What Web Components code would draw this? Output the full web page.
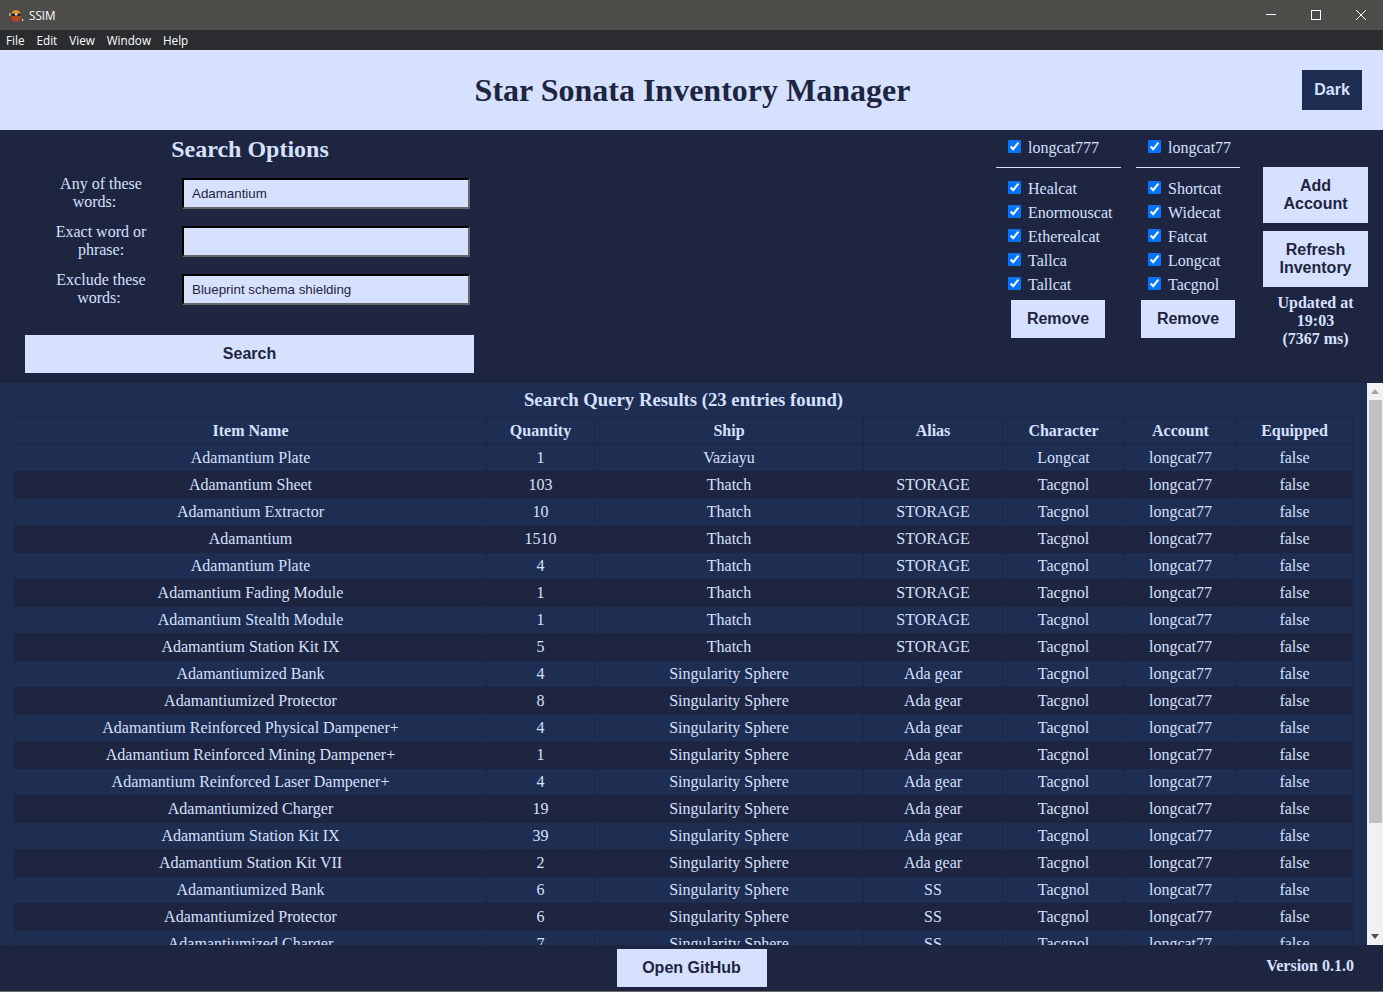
<!DOCTYPE html>
<html>
<head>
<meta charset="utf-8">
<title>SSIM</title>
<style>
  html, body { margin: 0; padding: 0; height: 100%; overflow: hidden; background: #1e2540; }
  body { font-family: "Liberation Serif", serif; font-size: 16px; color: #d6e0ff; }
  ssim-app { height: 992px; }
</style>
</head>
<body>
<ssim-app></ssim-app>
<script>
// small button used all over the page
class SsimButton extends HTMLElement {
  constructor () {
    super()
    this.attachShadow({ mode: 'open' }).innerHTML = `
      <style>
        :host {
          display: flex;
          align-items: center;
          justify-content: center;
          box-sizing: border-box;
          text-align: center;
          font: bold 16px/18px "Liberation Sans", Arial, sans-serif;
          background: #d6e0ff;
          color: #1e2540;
          cursor: pointer;
        }
        :host([dark]) { background: #1e2d52; color: #d6e0ff; }
      </style>
      <slot></slot>`
  }
}
customElements.define('ssim-button', SsimButton)

class SsimTitlebar extends HTMLElement {
  constructor () {
    super()
    this.attachShadow({ mode: 'open' }).innerHTML = `
      <style>
        :host {
          display: flex;
          align-items: center;
          height: 30px;
          background: #4d4c49;
          color: #fff;
          font: 11.7px "Open Sans", "Noto Sans", sans-serif;
        }
        .icon { margin: 0 5px 0 8px; }
        .title { flex: 1; padding-bottom: 1px; }
        .ctl { width: 45px; height: 30px; display: flex; align-items: center; justify-content: center; }
      </style>
      <svg class="icon" width="16" height="16" viewBox="0 0 16 16">
        <path d="M1 7.5h3" stroke="#9a9a98" stroke-width="3" fill="none"/>
        <circle cx="8" cy="8" r="5" fill="#c9702a"/>
        <path d="M3.5 6a5 5 0 0 1 9 0Z" fill="#e09a3c"/>
        <path d="M3 9.6a5 5 0 0 0 10 0Z" fill="#b8431c"/>
        <rect x="3.2" y="6.6" width="9.6" height="2.6" fill="#2c2422"/>
        <rect x="7" y="6.4" width="2.4" height="2" fill="#f4efe8"/>
        <rect x="14" y="12" width="1.2" height="2" fill="#d8d8d6"/>
      </svg>
      <span class="title">SSIM</span>
      <span class="ctl"><svg width="10" height="10" viewBox="0 0 10 10"><path d="M0 4.5H10" stroke="#fff" fill="none"/></svg></span>
      <span class="ctl"><svg width="10" height="10" viewBox="0 0 10 10"><rect x=".5" y=".5" width="9" height="9" stroke="#fff" fill="none"/></svg></span>
      <span class="ctl"><svg width="10" height="10" viewBox="0 0 10 10"><path d="M0 0L10 10M10 0L0 10" stroke="#fff" fill="none"/></svg></span>`
  }
}
customElements.define('ssim-titlebar', SsimTitlebar)

class SsimMenu extends HTMLElement {
  constructor () {
    super()
    var items = ['File', 'Edit', 'View', 'Window', 'Help']
    this.attachShadow({ mode: 'open' }).innerHTML = `
      <style>
        :host {
          display: flex;
          align-items: center;
          gap: 12px;
          box-sizing: border-box;
          height: 20px;
          padding: 0 0 1px 6px;
          background: #2b2c30;
          color: #fff;
          font: 11.7px "Open Sans", "Noto Sans", sans-serif;
        }
      </style>
      ${items.map(i => `<span>${i}</span>`).join('')}`
  }
}
customElements.define('ssim-menu', SsimMenu)

class SsimHeader extends HTMLElement {
  constructor () {
    super()
    this.attachShadow({ mode: 'open' }).innerHTML = `
      <style>
        :host {
          display: grid;
          grid-template-columns: 1fr auto 1fr;
          align-items: center;
          height: 80px;
          background: #d6e0ff;
          color: #1e2540;
        }
        h1 { grid-column: 2; margin: 0 0 0 2px; font: bold 32px "Liberation Serif", serif; }
        ssim-button { grid-column: 3; justify-self: end; width: 60px; height: 40px; margin-right: 21px; }
      </style>
      <h1>Star Sonata Inventory Manager</h1>
      <ssim-button dark>Dark</ssim-button>`
  }
}
customElements.define('ssim-header', SsimHeader)

class SsimField extends HTMLElement {
  constructor () {
    super()
    this.attachShadow({ mode: 'open' }).innerHTML = `
      <style>
        :host { display: flex; align-items: center; height: 36px; }
        label { width: 100px; margin-left: 51px; margin-right: 31px; text-align: center; line-height: 18px; }
        input {
          box-sizing: border-box;
          width: 288px;
          height: 31px;
          padding: 0 8px;
          border: 2px inset #767676;
          border-color: #222 #666 #666 #222;
          background: #d6e0ff;
          color: #1e2540;
          font: 13.33px "Liberation Sans", Arial, sans-serif;
          outline: none;
        }
      </style>
      <label><slot></slot></label>
      <input type="text">`
    this.shadowRoot.querySelector('input').value = this.getAttribute('value') || ''
  }
}
customElements.define('ssim-field', SsimField)

class SsimSearch extends HTMLElement {
  constructor () {
    super()
    this.attachShadow({ mode: 'open' }).innerHTML = `
      <style>
        :host { display: block; width: 500px; box-sizing: border-box; }
        h2 { margin: 5px 0 12px; text-align: center; font: bold 24px/28px "Liberation Serif", serif; }
        .fields { display: flex; flex-direction: column; gap: 12px; }
        ssim-button { width: 449px; height: 38px; margin: 28px 0 0 25px; }
      </style>
      <h2>Search Options</h2>
      <div class="fields">
        <ssim-field value="Adamantium">Any of these <span style="padding-right:13px">words:</span></ssim-field>
        <ssim-field>Exact word or phrase:</ssim-field>
        <ssim-field value="Blueprint schema shielding">Exclude these <span style="padding-right:4px">words:</span></ssim-field>
      </div>
      <ssim-button>Search</ssim-button>`
  }
}
customElements.define('ssim-search', SsimSearch)

class SsimCheck extends HTMLElement {
  constructor () {
    super()
    this.attachShadow({ mode: 'open' }).innerHTML = `
      <style>
        :host { display: flex; align-items: center; height: 24px; white-space: nowrap; }
        input { width: 13px; height: 13px; margin: 0 7px 3px 0; accent-color: #0075ff; }
      </style>
      <input type="checkbox" checked><slot></slot>`
  }
}
customElements.define('ssim-check', SsimCheck)

class SsimAccount extends HTMLElement {
  constructor () {
    super()
    var name = this.getAttribute('name')
    var chars = this.getAttribute('chars').split(',')
    this.attachShadow({ mode: 'open' }).innerHTML = `
      <style>
        :host { display: block; width: var(--col-w); }
        .head { padding: 6px 0 7px var(--col-pad); }
        hr { margin: 0 0 9px; border: 0; height: 1px; background: #d6e0ff; width: var(--rule-w); }
        .chars { padding-left: var(--col-pad); }
        ssim-button { width: 94px; height: 38px; margin: 3px 0 0 var(--btn-x); }
      </style>
      <div class="head"><ssim-check>${name}</ssim-check></div>
      <hr>
      <div class="chars">${chars.map(c => `<ssim-check>${c}</ssim-check>`).join('')}</div>
      <ssim-button>Remove</ssim-button>`
  }
}
customElements.define('ssim-account', SsimAccount)

class SsimActions extends HTMLElement {
  constructor () {
    super()
    this.attachShadow({ mode: 'open' }).innerHTML = `
      <style>
        :host { display: flex; flex-direction: column; width: 105px; padding-top: 37px; }
        ssim-button { height: 56px; margin-bottom: 8px; }
        p { margin: -1px 0 0; text-align: center; font-weight: bold; line-height: 18px; }
      </style>
      <ssim-button>Add<br>Account</ssim-button>
      <ssim-button>Refresh<br>Inventory</ssim-button>
      <p>Updated at<br>19:03<br>(7367 ms)</p>`
  }
}
customElements.define('ssim-actions', SsimActions)

class SsimTop extends HTMLElement {
  constructor () {
    super()
    this.attachShadow({ mode: 'open' }).innerHTML = `
      <style>
        :host { display: flex; height: 253px; background: #1e2540; }
        .gap { flex: 1; }
        .a1 { --col-w: 125px; --col-pad: 12px; --rule-w: 125px; --btn-x: 15px; margin-right: 15px; }
        .a2 { --col-w: 104px; --col-pad: 12px; --rule-w: 104px; --btn-x: 5px; margin-right: 23px; }
        ssim-actions { margin-right: 15px; }
      </style>
      <ssim-search></ssim-search>
      <div class="gap"></div>
      <ssim-account class="a1" name="longcat777" chars="Healcat,Enormouscat,Etherealcat,Tallca,Tallcat"></ssim-account>
      <ssim-account class="a2" name="longcat77" chars="Shortcat,Widecat,Fatcat,Longcat,Tacgnol"></ssim-account>
      <ssim-actions></ssim-actions>`
  }
}
customElements.define('ssim-top', SsimTop)

var COLS = ['Item Name', 'Quantity', 'Ship', 'Alias', 'Character', 'Account', 'Equipped']
var WIDTHS = [472, 108, 269, 139, 122, 112, 116]
var T = 'Thatch', S = 'Singularity Sphere', ST = 'STORAGE', A = 'Ada gear'
var ROWS = [
  ['Adamantium Plate', 1, 'Vaziayu', '', 'Longcat'],
  ['Adamantium Sheet', 103, T, ST],
  ['Adamantium Extractor', 10, T, ST],
  ['Adamantium', 1510, T, ST],
  ['Adamantium Plate', 4, T, ST],
  ['Adamantium Fading Module', 1, T, ST],
  ['Adamantium Stealth Module', 1, T, ST],
  ['Adamantium Station Kit IX', 5, T, ST],
  ['Adamantiumized Bank', 4, S, A],
  ['Adamantiumized Protector', 8, S, A],
  ['Adamantium Reinforced Physical Dampener+', 4, S, A],
  ['Adamantium Reinforced Mining Dampener+', 1, S, A],
  ['Adamantium Reinforced Laser Dampener+', 4, S, A],
  ['Adamantiumized Charger', 19, S, A],
  ['Adamantium Station Kit IX', 39, S, A],
  ['Adamantium Station Kit VII', 2, S, A],
  ['Adamantiumized Bank', 6, S, 'SS'],
  ['Adamantiumized Protector', 6, S, 'SS'],
  ['Adamantiumized Charger', 7, S, 'SS']
]

class SsimScrollbar extends HTMLElement {
  constructor () {
    super()
    this.attachShadow({ mode: 'open' }).innerHTML = `
      <style>
        :host { display: flex; flex-direction: column; width: 16px; background: #f1f1f1; }
        .arrow { height: 17px; display: flex; align-items: center; justify-content: center; }
        .track { flex: 1; }
        .thumb { height: 423px; margin: 0 1px 0 2px; background: #c1c1c1; }
      </style>
      <div class="arrow"><svg width="8" height="5" viewBox="0 0 8 5"><path d="M4 0L8 5H0Z" fill="#a3a3a3"/></svg></div>
      <div class="track"><div class="thumb"></div></div>
      <div class="arrow"><svg width="8" height="5" viewBox="0 0 8 5"><path d="M0 0H8L4 5Z" fill="#505050"/></svg></div>`
  }
}
customElements.define('ssim-scrollbar', SsimScrollbar)

class SsimResults extends HTMLElement {
  constructor () {
    super()
    var row = r => {
      var cells = [r[0], r[1], r[2], r[3], r[4] || 'Tacgnol', 'longcat77', 'false']
      return `<tr>${cells.map(c => `<td>${c}</td>`).join('')}</tr>`
    }
    this.attachShadow({ mode: 'open' }).innerHTML = `
      <style>
        :host { display: flex; height: 562px; background: #1e2d52; }
        .scroll { flex: 1; min-width: 0; overflow: hidden; padding: 0 14px; }
        h3 { margin: 6px 0 6px; text-align: center; font: bold 18.72px/22px "Liberation Serif", serif; }
        table { border-collapse: collapse; table-layout: fixed; width: 1338px; }
        th, td { border: 1px solid #1e2540; padding: 4px 0; line-height: 18px; text-align: center; font-size: 16px; }
        tbody tr:nth-child(even) { background: #1e2540; }
      </style>
      <div class="scroll">
        <h3>Search Query Results (23 entries found)</h3>
        <table>
          <colgroup>${WIDTHS.map(w => `<col style="width:${w}px">`).join('')}</colgroup>
          <thead><tr>${COLS.map(c => `<th>${c}</th>`).join('')}</tr></thead>
          <tbody>${ROWS.map(row).join('')}</tbody>
        </table>
      </div>
      <ssim-scrollbar></ssim-scrollbar>`
  }
}
customElements.define('ssim-results', SsimResults)

class SsimFooter extends HTMLElement {
  constructor () {
    super()
    this.attachShadow({ mode: 'open' }).innerHTML = `
      <style>
        :host {
          display: grid;
          grid-template-columns: 1fr auto 1fr;
          align-items: center;
          height: 46px;
          background: #1e2540;
          border-bottom: 1px solid #6c6c6c;
        }
        ssim-button { grid-column: 2; width: 150px; height: 38px; }
        span { grid-column: 3; justify-self: end; margin: 0 29px 4px 0; font-weight: bold; }
      </style>
      <ssim-button>Open GitHub</ssim-button>
      <span>Version 0.1.0</span>`
  }
}
customElements.define('ssim-footer', SsimFooter)

class SsimApp extends HTMLElement {
  constructor () {
    super()
    this.attachShadow({ mode: 'open' }).innerHTML = `
      <style>
        :host { display: flex; flex-direction: column; }
      </style>
      <ssim-titlebar></ssim-titlebar>
      <ssim-menu></ssim-menu>
      <ssim-header></ssim-header>
      <ssim-top></ssim-top>
      <ssim-results></ssim-results>
      <ssim-footer></ssim-footer>`
  }
}
customElements.define('ssim-app', SsimApp)
</script>
</body>
</html>
